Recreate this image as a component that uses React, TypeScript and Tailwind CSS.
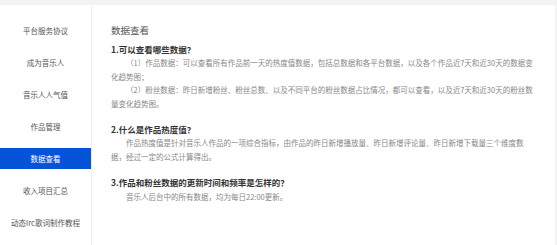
import React from "react";

const menu = [
    "平台服务协议",
    "成为音乐人",
    "音乐人人气值",
    "作品管理",
    "数据查看",
    "收入项目汇总",
    "动态lrc歌词制作教程",
];

const App: React.FC = () => {
    const active = "数据查看";

    return (
        <div
            className="w-[557px] h-[245px] bg-[#f3f3f3] pt-[5px] pr-[2px] overflow-hidden"
            style={{ fontFamily: '"Noto Sans CJK SC", "Microsoft YaHei", sans-serif' }}
        >
            <div className="flex h-full bg-white">
                {/* 左侧菜单 */}
                <div className="w-[92px] shrink-0 border-r border-[#eeeeee] pt-[15px] flex flex-col gap-[11px]">
                    {menu.map((item) => (
                        <div
                            key={item}
                            className={
                                item === active
                                    ? "h-[21px] flex items-center justify-center text-[7.5px] text-white bg-[#0453d9]"
                                    : "h-[21px] flex items-center justify-center text-[7.5px] text-[#555555]"
                            }
                        >
                            {item}
                        </div>
                    ))}
                </div>

                {/* 内容 */}
                <div className="flex-1 pl-[19px] pr-[18px] pt-[18px] text-[#888888]">
                    <h1 className="text-[9.5px] leading-[14px] text-[#555555]">数据查看</h1>

                    <h2 className="mt-[5px] text-[8.5px] leading-[14px] font-bold text-[#333333]">1.可以查看哪些数据？</h2>
                    <p className="text-[7.5px] leading-[13.5px] indent-[15px]">
                        （1）作品数据：可以查看所有作品前一天的热度值数据，包括总数据和各平台数据，以及各个作品近7天和近30天的数据变化趋势图；
                    </p>
                    <p className="text-[7.5px] leading-[13.5px] indent-[15px]">
                        （2）粉丝数据：昨日新增粉丝、粉丝总数、以及不同平台的粉丝数据占比情况，都可以查看，以及近7天和近30天的粉丝数量变化趋势图。
                    </p>

                    <h2 className="mt-[12px] text-[8.5px] leading-[14px] font-bold text-[#333333]">2.什么是作品热度值？</h2>
                    <p className="max-w-[419px] text-[7.5px] leading-[14px] indent-[15px]">
                        作品热度值是针对音乐人作品的一项综合指标，由作品的昨日新增播放量、昨日新增评论量、昨日新增下载量三个维度数据，经过一定的公式计算得出。
                    </p>

                    <h2 className="mt-[11px] text-[8.5px] leading-[14px] font-bold text-[#333333]">3.作品和粉丝数据的更新时间和频率是怎样的？</h2>
                    <p className="mt-[1px] text-[7.5px] leading-[14px] indent-[15px]">
                        音乐人后台中的所有数据，均为每日22:00更新。
                    </p>
                </div>
            </div>
        </div>
    );
};

export default App;
